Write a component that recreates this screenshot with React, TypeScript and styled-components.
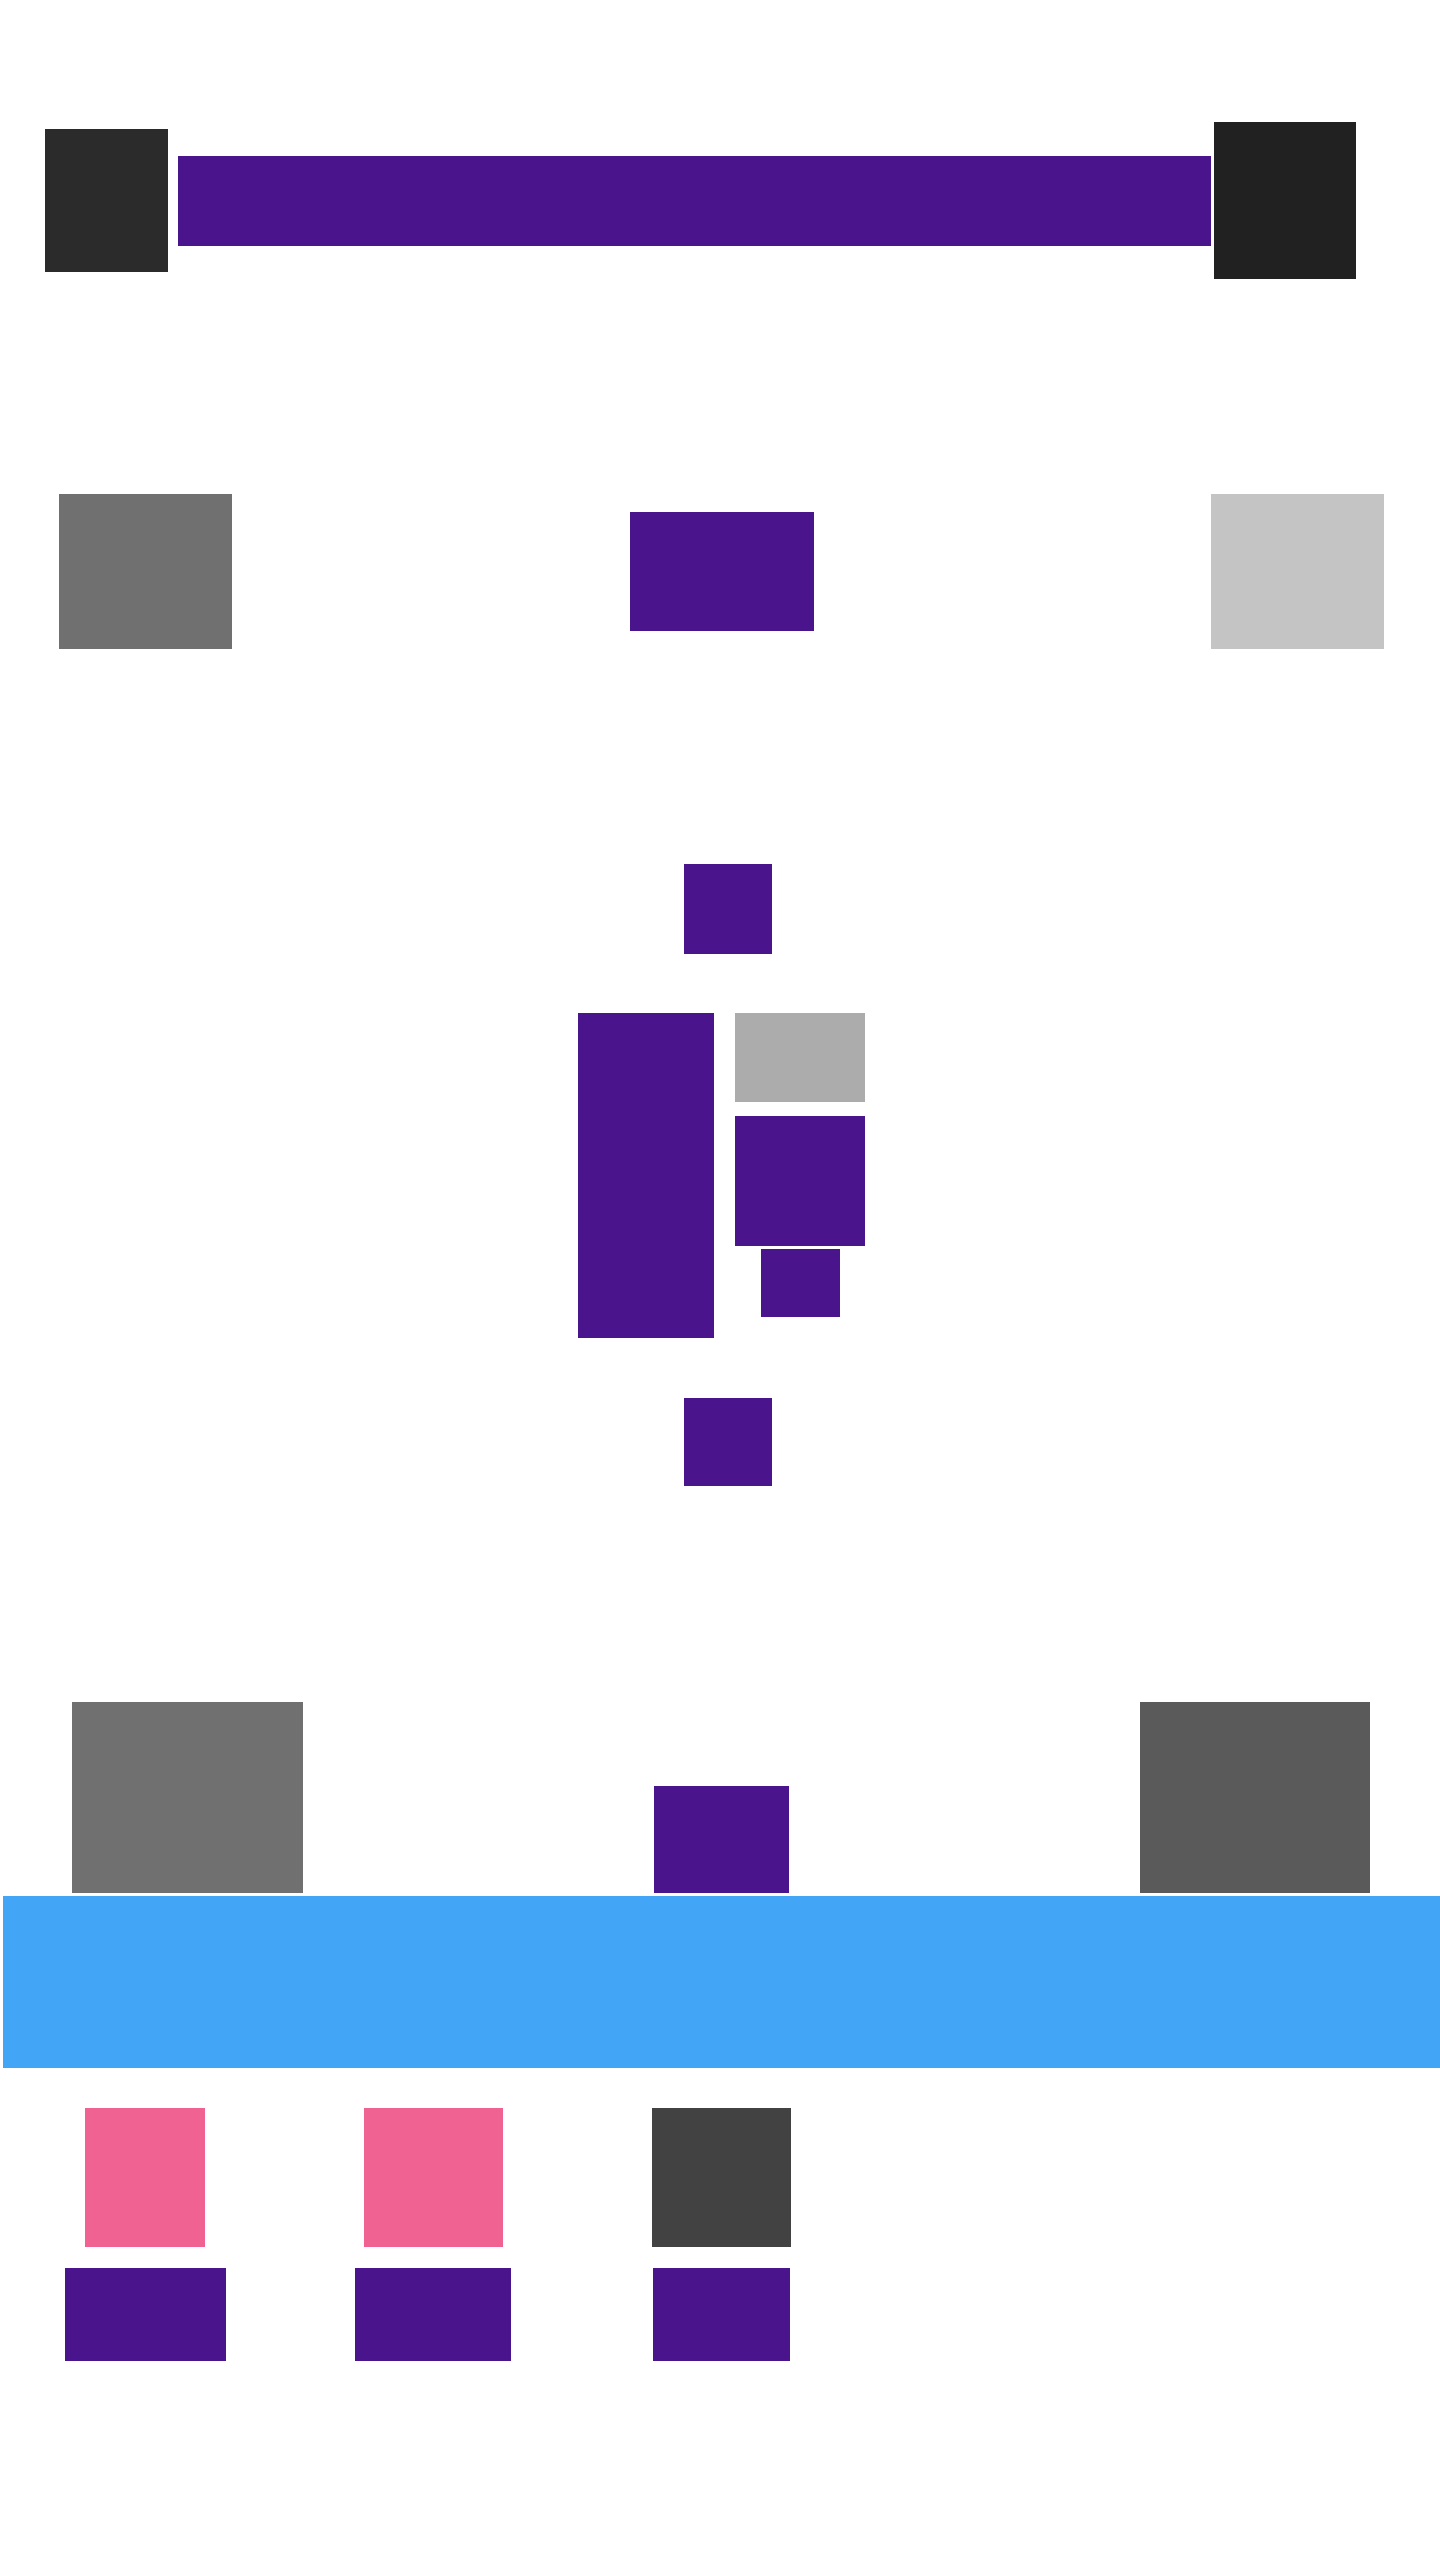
import React from "react";
import styled, { createGlobalStyle } from "styled-components";

const Global = createGlobalStyle`
  html, body { margin: 0; padding: 0; background: #ffffff; }
  body { font-family: "Liberation Sans", Arial, sans-serif; }
`;

const Page = styled.div`
  width: 1440px;
  min-height: 2560px;
  display: flex;
  flex-direction: column;
  background: #ffffff;
`;

const Block = styled.div<{ $w: number; $h: number; $c: string; $ml?: number; $mt?: number }>`
  width: ${(p) => p.$w}px;
  height: ${(p) => p.$h}px;
  background: ${(p) => p.$c};
  flex-shrink: 0;
  margin-left: ${(p) => p.$ml ?? 0}px;
  margin-top: ${(p) => p.$mt ?? 0}px;
`;

const Header = styled.header`
  display: flex;
  align-items: center;
  margin-top: 122px;
  padding-left: 45px;
  height: 157px;
`;

const HeaderLogo = styled(Block)`
  margin-right: 10px;
`;

const HeaderAction = styled(Block)`
  margin-left: 3px;
`;

const Feature = styled.section`
  display: flex;
  align-items: center;
  justify-content: space-between;
  margin-top: 215px;
  padding: 0 56px 0 59px;
  height: 155px;
`;

const Showcase = styled.section`
  display: flex;
  flex-direction: column;
  align-items: center;
  margin-top: 215px;
`;

const ShowRow = styled.div`
  display: flex;
  align-items: flex-start;
  gap: 21px;
  margin: 59px 0 60px 3px;
`;

const SideColumn = styled.div`
  display: flex;
  flex-direction: column;
  align-items: center;
`;

const Stats = styled.section`
  display: flex;
  align-items: flex-end;
  justify-content: space-between;
  margin-top: 216px;
  padding: 0 70px 0 72px;
  height: 191px;
`;

const Banner = styled.div`
  margin: 3px 0 0 3px;
  height: 172px;
  background: #42a5f5;
`;

const Gallery = styled.section`
  display: grid;
  grid-template-columns: repeat(3, 288px);
  row-gap: 21px;
  justify-items: center;
  margin-top: 40px;
  padding-left: 1px;
`;

const PURPLE = "#4a148c";

export default function App() {
  return (
    <>
      <Global />
      <Page>
        <Header>
          <HeaderLogo $w={123} $h={143} $c="#2b2b2b" />
          <Block $w={1033} $h={90} $c={PURPLE} />
          <HeaderAction $w={142} $h={157} $c="#212121" />
        </Header>

        <Feature>
          <Block $w={173} $h={155} $c="#707070" />
          <Block $w={184} $h={119} $c={PURPLE} />
          <Block $w={173} $h={155} $c="#c4c4c4" />
        </Feature>

        <Showcase>
          <Block $w={88} $h={90} $c={PURPLE} $ml={16} />
          <ShowRow>
            <Block $w={136} $h={325} $c={PURPLE} />
            <SideColumn>
              <Block $w={130} $h={89} $c="#acacac" />
              <Block $w={130} $h={130} $c={PURPLE} $mt={14} />
              <Block $w={79} $h={68} $c={PURPLE} $mt={3} />
            </SideColumn>
          </ShowRow>
          <Block $w={88} $h={88} $c={PURPLE} $ml={16} />
        </Showcase>

        <Stats>
          <Block $w={231} $h={191} $c="#707070" />
          <Block $w={135} $h={107} $c={PURPLE} />
          <Block $w={230} $h={191} $c="#5a5a5a" />
        </Stats>

        <Banner />

        <Gallery>
          <Block $w={120} $h={139} $c="#f06292" />
          <Block $w={139} $h={139} $c="#f06292" />
          <Block $w={139} $h={139} $c="#424242" />
          <Block $w={161} $h={93} $c={PURPLE} />
          <Block $w={156} $h={93} $c={PURPLE} />
          <Block $w={137} $h={93} $c={PURPLE} />
        </Gallery>
      </Page>
    </>
  );
}
